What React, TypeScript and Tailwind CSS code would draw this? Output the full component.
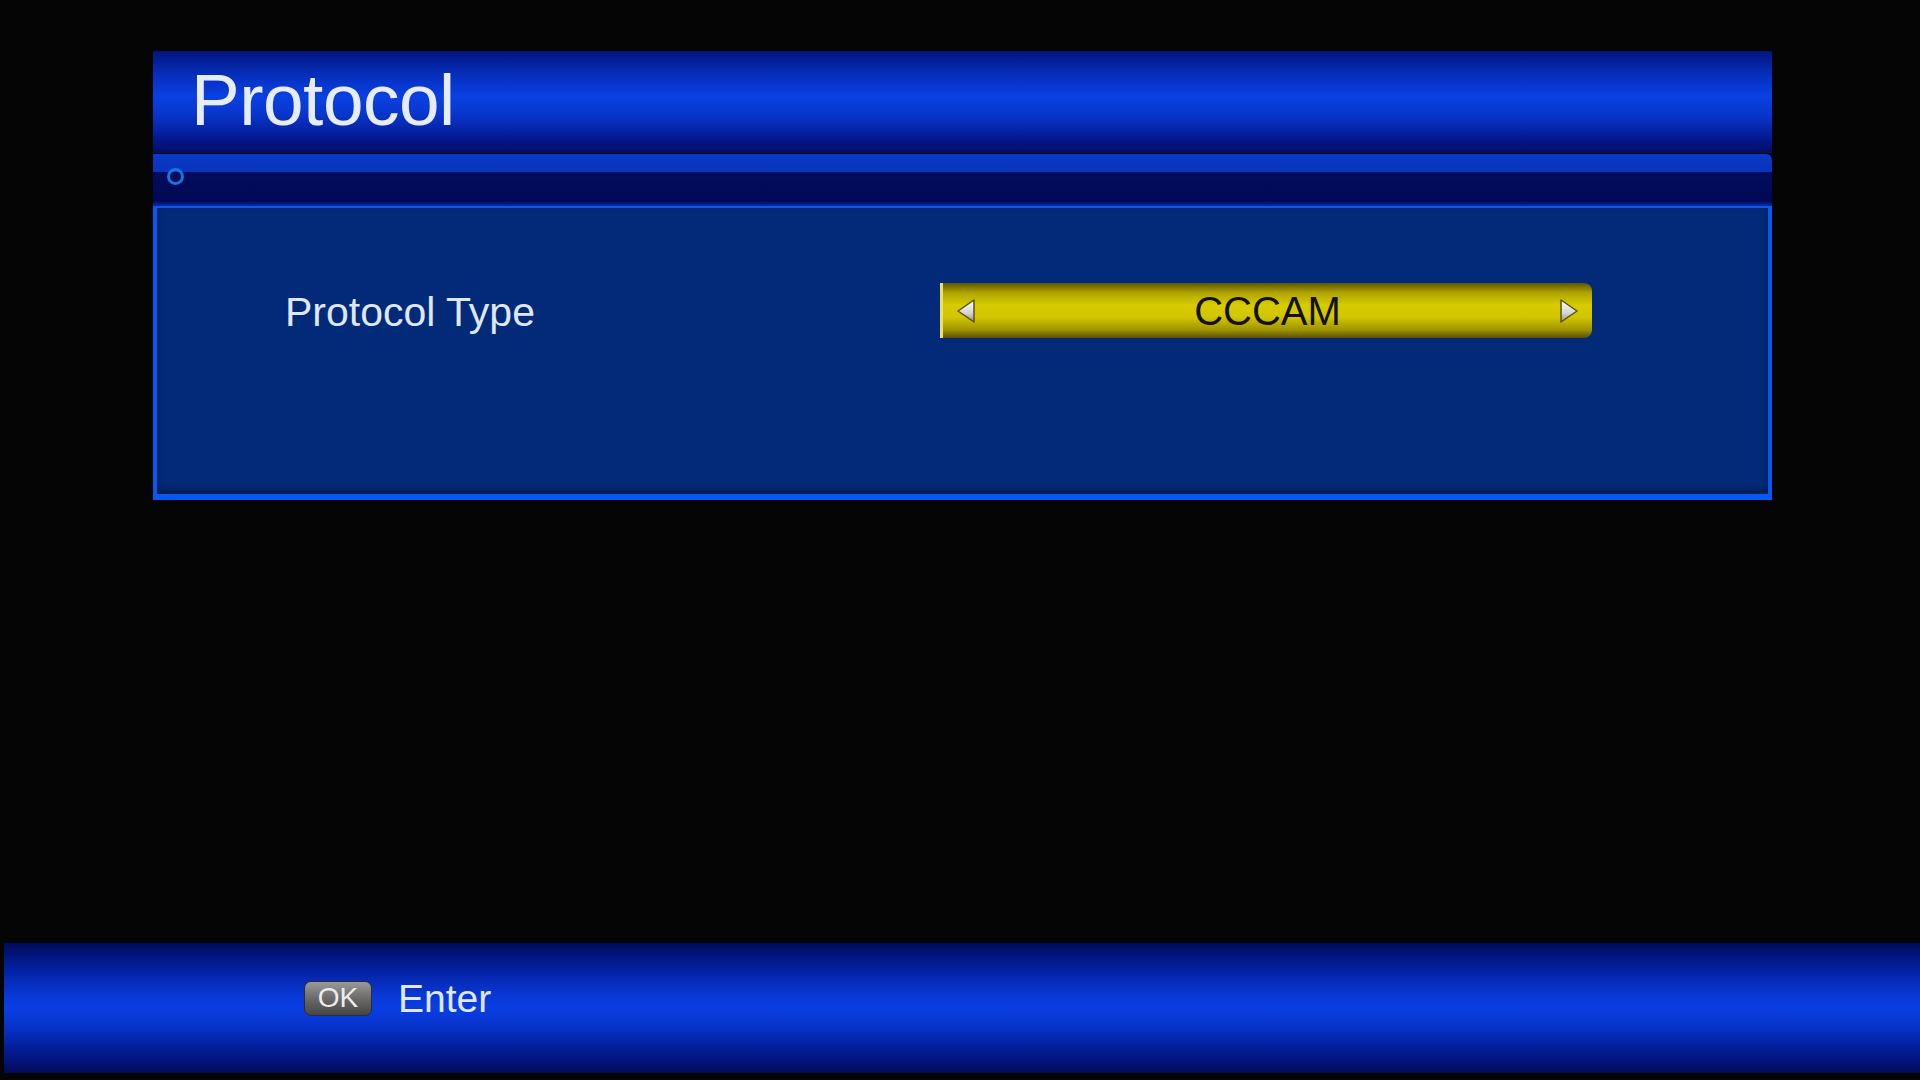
import React from 'react';

const font = { fontFamily: '"Liberation Sans", Arial, sans-serif' };

const ArrowLeft: React.FC = () => (
  <svg width="22" height="28" viewBox="0 0 22 28">
    <defs>
      <linearGradient id="al" x1="0" y1="0" x2="0" y2="1">
        <stop offset="0" stopColor="#ffffff" />
        <stop offset="0.6" stopColor="#d4d4d4" />
        <stop offset="1" stopColor="#8a8a8a" />
      </linearGradient>
    </defs>
    <path d="M19 3 L3 14 L19 25 Z" fill="url(#al)" stroke="#5a5200" strokeWidth="1.5" strokeLinejoin="round" />
  </svg>
);

const ArrowRight: React.FC = () => (
  <svg width="22" height="28" viewBox="0 0 22 28">
    <defs>
      <linearGradient id="ar" x1="0" y1="0" x2="0" y2="1">
        <stop offset="0" stopColor="#ffffff" />
        <stop offset="0.6" stopColor="#d4d4d4" />
        <stop offset="1" stopColor="#8a8a8a" />
      </linearGradient>
    </defs>
    <path d="M3 3 L19 14 L3 25 Z" fill="url(#ar)" stroke="#5a5200" strokeWidth="1.5" strokeLinejoin="round" />
  </svg>
);

export default function App() {
  return (
    <div className="w-[1920px] h-[1080px] bg-[#050505] flex flex-col overflow-hidden" style={font}>
      {/* title bar */}
      <div className="ml-[153px] mt-[51px] w-[1619px] h-[102px] flex items-center pl-[38px] bg-[linear-gradient(to_bottom,#03157c_0%,#0630c0_25%,#0a40e2_45%,#0836cc_62%,#041a94_85%,#020c66_100%)]">
        <span className="text-[73px] leading-none text-[#e6edf8] tracking-[-0.5px] -mt-[6px]">Protocol</span>
      </div>

      {/* sub bar */}
      <div className="ml-[153px] mt-[1px] w-[1619px] h-[52px] flex flex-col rounded-tr-[6px] overflow-hidden">
        <div className="h-[18px] bg-[linear-gradient(to_bottom,#0a3ac8,#0834bc)] flex items-end pl-[14px]">
          <div className="w-[17px] h-[17px] rounded-full border-[3px] border-[#1a74dc] -mb-[13px] relative z-10" />
        </div>
        <div className="flex-1 bg-[linear-gradient(to_bottom,#020c5e,#010955_85%,#062aa8)]" />
      </div>

      {/* content panel */}
      <div className="ml-[153px] w-[1619px] h-[294px] bg-[#022a78] border-x-[4px] border-b-[6px] border-t-[2px] border-[#0a58f2] shadow-[inset_0_-4px_6px_rgba(0,0,0,0.35)] flex items-start pt-[75px] pl-[1px]">
        <div className="w-[782px] pl-[127px] pt-[4px] h-[55px] flex items-center text-[41px] text-[#dde7f5] leading-none">
          Protocol Type
        </div>
        <div className="relative w-[652px] h-[55px] rounded-r-[8px] flex items-center justify-between px-[12px] bg-[linear-gradient(to_bottom,#5e5400_0%,#b0a400_18%,#d6cc00_40%,#d2c600_62%,#a09400_85%,#5a5000_100%)] border-l-[3px] border-[#e8df70]">
          <ArrowLeft />
          <span className="absolute left-0 right-0 text-center text-[40px] leading-none text-[#141000]">CCCAM</span>
          <ArrowRight />
        </div>
      </div>

      <div className="flex-1" />

      {/* bottom help bar */}
      <div className="ml-[4px] mb-[7px] h-[130px] flex items-center pl-[300px] pb-[20px] bg-[linear-gradient(to_bottom,#010b5c_0%,#0320a0_20%,#0838d4_40%,#0a3ee4_50%,#0732c8_65%,#031c96_82%,#010a5a_100%)]">
        <div className="w-[68px] h-[35px] rounded-[7px] border border-[#2c2c2c] bg-[linear-gradient(to_bottom,#9a9a9a,#6a6a6a_50%,#464646)] flex items-center justify-center text-[28px] leading-none text-[#ececec]">
          OK
        </div>
        <span className="ml-[26px] text-[39px] leading-none text-[#dfe8f8]">Enter</span>
      </div>
    </div>
  );
}
